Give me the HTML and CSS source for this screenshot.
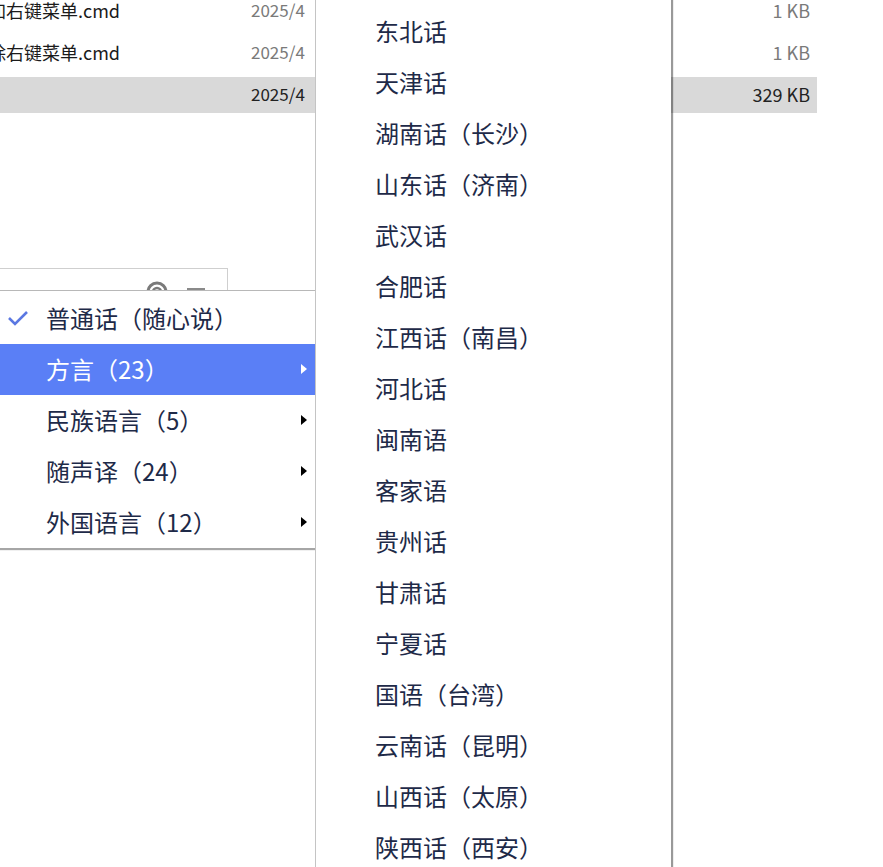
FILE: index.html
```html
<!DOCTYPE html>
<html>
    <head>
        <meta charset="utf-8">
        <link rel="stylesheet" href="styles.css">
    </head>
    <body>
        <div class="files">
            <div class="file-row">
                <span class="name">添加右键菜单.cmd</span>
                <span class="date">2025/4</span>
                <span class="size">1 KB</span>
            </div>
            <div class="file-row">
                <span class="name">移除右键菜单.cmd</span>
                <span class="date">2025/4</span>
                <span class="size">1 KB</span>
            </div>
            <div class="file-row selected">
                <span class="name"></span>
                <span class="date">2025/4</span>
                <span class="size">329 KB</span>
            </div>
        </div>

        <div class="toolbar">
            <svg class="tool-icon" width="24" height="14" viewBox="0 0 24 14">
                <path d="M3 16 A9 9 0 0 1 21 16" fill="none" stroke="#7a7a7a" stroke-width="3"/>
                <path d="M8 16 A4 4 0 0 1 16 16" fill="none" stroke="#7a7a7a" stroke-width="2.5"/>
            </svg>
            <svg class="tool-icon" width="22" height="14" viewBox="0 0 22 14">
                <rect x="2" y="12" width="18" height="2" fill="#8a8a8a"/>
            </svg>
        </div>

        <div class="menu">
            <div class="menu-item">
                <svg class="check" width="22" height="18" viewBox="0 0 22 18">
                    <polyline points="2,9 8,15 20,3" fill="none" stroke="#5b78e2" stroke-width="2.6"/>
                </svg>
                <span>普通话（随心说）</span>
            </div>
            <div class="menu-item active">
                <span>方言（23）</span>
                <i class="arrow"></i>
            </div>
            <div class="menu-item">
                <span>民族语言（5）</span>
                <i class="arrow"></i>
            </div>
            <div class="menu-item">
                <span>随声译（24）</span>
                <i class="arrow"></i>
            </div>
            <div class="menu-item">
                <span>外国语言（12）</span>
                <i class="arrow"></i>
            </div>
        </div>

        <div class="submenu">
            <div class="sub-item">东北话</div>
            <div class="sub-item">天津话</div>
            <div class="sub-item">湖南话（长沙）</div>
            <div class="sub-item">山东话（济南）</div>
            <div class="sub-item">武汉话</div>
            <div class="sub-item">合肥话</div>
            <div class="sub-item">江西话（南昌）</div>
            <div class="sub-item">河北话</div>
            <div class="sub-item">闽南语</div>
            <div class="sub-item">客家语</div>
            <div class="sub-item">贵州话</div>
            <div class="sub-item">甘肃话</div>
            <div class="sub-item">宁夏话</div>
            <div class="sub-item">国语（台湾）</div>
            <div class="sub-item">云南话（昆明）</div>
            <div class="sub-item">山西话（太原）</div>
            <div class="sub-item">陕西话（西安）</div>
        </div>
    </body>
</html>
```

FILE: styles.css
```css
body {
    margin: 0;
    background-color: white;
    font-family: "Noto Sans CJK SC", "Noto Sans", sans-serif;
    overflow: hidden;
    height: 867px;
    position: relative;
}

/* file list behind the popup */
.files {
    margin-top: -7px;
    width: 817px;
    display: flex;
    flex-direction: column;
    gap: 6px;
}
.file-row {
    height: 36px;
    box-sizing: border-box;
    padding-bottom: 3px;
    display: flex;
    align-items: center;
    font-size: 18px;
    color: #1b1b1b;
    white-space: nowrap;
}
.file-row.selected {
    background-color: #d9d9d9;
}
.name {
    width: 251px;
    margin-left: -30px;
    flex: none;
    overflow: hidden;
}
.date {
    color: #7a7a7a;
    width: 300px;
    margin-left: 30px;
    flex: none;
    font-size: 17px;
}
.size {
    color: #7a7a7a;
    flex: 1;
    text-align: right;
    padding-right: 7px;
    font-size: 18px;
}
.selected .date, .selected .size {
    color: #222;
}

.toolbar {
    position: absolute;
    left: 0;
    top: 268px;
    width: 228px;
    height: 30px;
    border-top: 1px solid #cfcfcf;
    border-right: 1px solid #cfcfcf;
    display: flex;
    align-items: flex-end;
    justify-content: flex-end;
    gap: 16px;
    padding-right: 20px;
    box-sizing: border-box;
    padding-bottom: 8px;
}

/* popup menu */
.menu {
    position: absolute;
    left: 0;
    top: 290px;
    width: 315px;
    padding-top: 2px;
    background-color: white;
    border-top: 1px solid #b8b8b8;
    box-shadow: 0 2px 1px rgba(0, 0, 0, 0.35);
}
.menu-item {
    height: 51px;
    box-sizing: border-box;
    padding-bottom: 2px;
    display: flex;
    align-items: center;
    padding-left: 46px;
    font-size: 24px;
    color: #1e2a48;
    position: relative;
}
.menu-item.active {
    background-color: #5a7ff6;
    color: white;
}
.check {
    position: absolute;
    left: 7px;
    top: 16px;
}
.arrow {
    position: absolute;
    right: 8px;
    top: 20px;
    width: 0;
    height: 0;
    border-top: 5px solid transparent;
    border-bottom: 5px solid transparent;
    border-left: 6px solid black;
}
.active .arrow {
    border-left-color: white;
}

.submenu {
    position: absolute;
    left: 315px;
    top: 0;
    width: 356px;
    height: 900px;
    padding-top: 6px;
    box-sizing: border-box;
    background-color: white;
    border-left: 1px solid #c4c4c4;
    box-shadow: 2px 0 1px rgba(0, 0, 0, 0.4);
}
.sub-item {
    height: 51px;
    box-sizing: border-box;
    padding-bottom: 2px;
    display: flex;
    align-items: center;
    padding-left: 59px;
    font-size: 24px;
    color: #1e2a48;
}
```
